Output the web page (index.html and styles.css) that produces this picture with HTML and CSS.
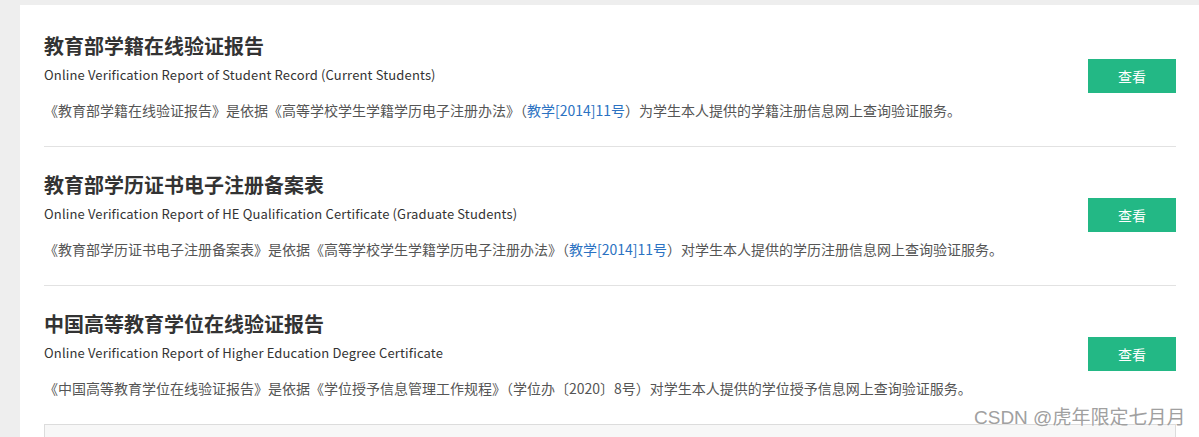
FILE: index.html
```html
<!DOCTYPE html>
<html lang="zh-CN">
<head>
    <meta charset="UTF-8">
    <meta name="viewport" content="width=device-width, initial-scale=1.0">
    <title>在线验证报告</title>
    <link rel="stylesheet" href="styles.css">
</head>
<body>

    <div class="panel">
        <!-- Report List -->
        <div class="report">
            <div class="report-text">
                <h2>教育部学籍在线验证报告</h2>
                <p class="en">Online Verification Report of Student Record (Current Students)</p>
                <p class="desc">《教育部学籍在线验证报告》是依据《高等学校学生学籍学历电子注册办法》（<a href="#">教学[2014]11号</a>）为学生本人提供的学籍注册信息网上查询验证服务。</p>
            </div>
            <a href="#" class="btn">查看</a>
        </div>

        <div class="report">
            <div class="report-text">
                <h2>教育部学历证书电子注册备案表</h2>
                <p class="en">Online Verification Report of HE Qualification Certificate (Graduate Students)</p>
                <p class="desc">《教育部学历证书电子注册备案表》是依据《高等学校学生学籍学历电子注册办法》（<a href="#">教学[2014]11号</a>）对学生本人提供的学历注册信息网上查询验证服务。</p>
            </div>
            <a href="#" class="btn">查看</a>
        </div>

        <div class="report last">
            <div class="report-text">
                <h2>中国高等教育学位在线验证报告</h2>
                <p class="en">Online Verification Report of Higher Education Degree Certificate</p>
                <p class="desc">《中国高等教育学位在线验证报告》是依据《学位授予信息管理工作规程》（学位办〔2020〕8号）对学生本人提供的学位授予信息网上查询验证服务。</p>
            </div>
            <a href="#" class="btn">查看</a>
        </div>

        <!-- Notice Box -->
        <div class="notice"></div>
    </div>

    <div class="watermark">CSDN @虎年限定七月月</div>

</body>
</html>
```

FILE: styles.css
```css
/* General Reset */
* {
    box-sizing: border-box;
    margin: 0;
    padding: 0;
    font-family: "Noto Sans CJK SC", "Noto Sans", sans-serif;
}

body {
    background: #eeeeee;
    overflow: hidden;
    padding: 5px 0 0 20px;
    height: 100vh;
}

/* White Panel */
.panel {
    background: #fff;
    padding: 3px 23px 0 24px;
    height: 100%;
    overflow: hidden;
}

/* Report Rows */
.report {
    display: flex;
    align-items: flex-start;
    padding: 23px 0 26px;
    border-bottom: 1px solid #e2e2e2;
}

.report.last {
    border-bottom: none;
}

.report-text {
    flex-grow: 1;
}

.report h2 {
    font-size: 20px;
    line-height: 30px;
    font-weight: bold;
    color: #333;
}

.report .en {
    font-size: 13px;
    line-height: 20px;
    letter-spacing: 0.15px;
    margin-top: 4px;
    color: #333;
}

.report .desc {
    font-size: 14px;
    line-height: 20px;
    margin-top: 15px;
    color: #555;
}

.report .desc a {
    color: #2b72c2;
    text-decoration: none;
}

/* Button */
.btn {
    display: block;
    width: 88px;
    height: 34px;
    line-height: 34px;
    margin-top: 28px;
    text-align: center;
    background: #23b885;
    color: #fff;
    font-size: 14px;
    text-decoration: none;
}

/* Bottom Notice Box */
.notice {
    height: 40px;
    background: #f7f7f7;
    border: 1px solid #dcdcdc;
}

/* CSDN Watermark */
.watermark {
    position: absolute;
    left: 974px;
    top: 402px;
    font-size: 19px;
    color: #a0a0a0;
    text-shadow: 0 0 2px #fff;
    font-family: "Liberation Sans", "Noto Sans CJK SC", sans-serif;
}
```
